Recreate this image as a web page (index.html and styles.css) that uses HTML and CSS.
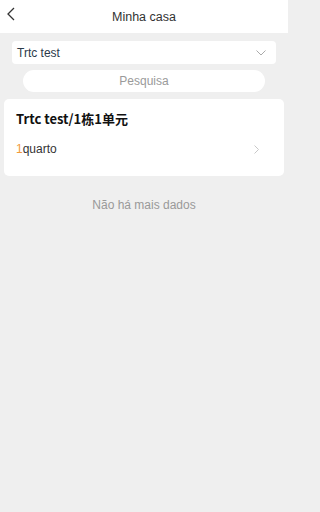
FILE: index.html
```html
<!DOCTYPE html>
<html>
<head>
<meta charset="utf-8">
<link rel="stylesheet" href="styles.css">
</head>
<body>
<div class="page">
  <header class="topbar">
    <span class="back">
      <svg width="10" height="14" viewBox="0 0 10 14"><path d="M8 1 L2 7 L8 13" fill="none" stroke="#333" stroke-width="1.3"/></svg>
    </span>
    <span class="title">Minha casa</span>
  </header>
  <main class="content">
    <div class="select">
      <span class="select-text">Trtc test</span>
      <svg class="select-arrow" width="10" height="6" viewBox="0 0 10 6"><path d="M0.5 0.5 L5 5 L9.5 0.5" fill="none" stroke="#aaa" stroke-width="1"/></svg>
    </div>
    <div class="search">Pesquisa</div>
    <section class="card">
      <h2 class="card-title">Trtc test/1栋1单元</h2>
      <div class="card-row">
        <span class="room"><span class="num">1</span>quarto</span>
        <svg class="row-arrow" width="5" height="9" viewBox="0 0 5 9"><path d="M0.5 0.5 L4.5 4.5 L0.5 8.5" fill="none" stroke="#c8c8c8" stroke-width="1"/></svg>
      </div>
    </section>
    <p class="nomore">Não há mais dados</p>
  </main>
</div>
</body>
</html>
```
FILE: styles.css
```css
* { box-sizing: border-box; }
html, body { margin: 0; padding: 0; }
body {
  font-family: "Liberation Sans", Arial, "Noto Sans CJK SC", sans-serif;
  background: #efefef;
  width: 288px;
  height: 512px;
}
.page { display: flex; flex-direction: column; min-height: 512px; }
.topbar {
  height: 33px;
  background: #fff;
  display: flex;
  align-items: center;
  justify-content: center;
  position: relative;
}
.back {
  position: absolute;
  left: 6px;
  top: 7px;
  display: flex;
}
.title {
  font-size: 12.5px;
  color: #333;
}
.content {
  display: flex;
  flex-direction: column;
  padding: 8px 4px 0;
}
.select {
  margin: 0 8px;
  height: 23px;
  background: #fff;
  border-radius: 4px;
  display: flex;
  align-items: center;
  justify-content: space-between;
  padding: 0 10px 0 5px;
}
.select-text {
  font-size: 12px;
  color: #2c3a4a;
}
.search {
  margin: 6px 19px 0;
  height: 22px;
  background: #fff;
  border-radius: 11px;
  display: flex;
  align-items: center;
  justify-content: center;
  font-size: 12px;
  color: #9a9a9a;
}
.card {
  margin-top: 7px;
  background: #fff;
  border-radius: 5px;
  padding: 11px 12px 0;
  height: 77px;
}
.card-title {
  margin: 0;
  font-family: "Noto Sans CJK SC", "Liberation Sans", sans-serif;
  font-size: 13px;
  font-weight: bold;
  color: #111;
  line-height: 18px;
}
.card-row {
  margin-top: 14px;
  display: flex;
  align-items: center;
  justify-content: space-between;
  padding-right: 13px;
}
.room {
  font-size: 12px;
  color: #333;
}
.num { color: #f29a3a; }
.nomore {
  margin: 22px 0 0;
  text-align: center;
  font-size: 12px;
  color: #999;
}
```
